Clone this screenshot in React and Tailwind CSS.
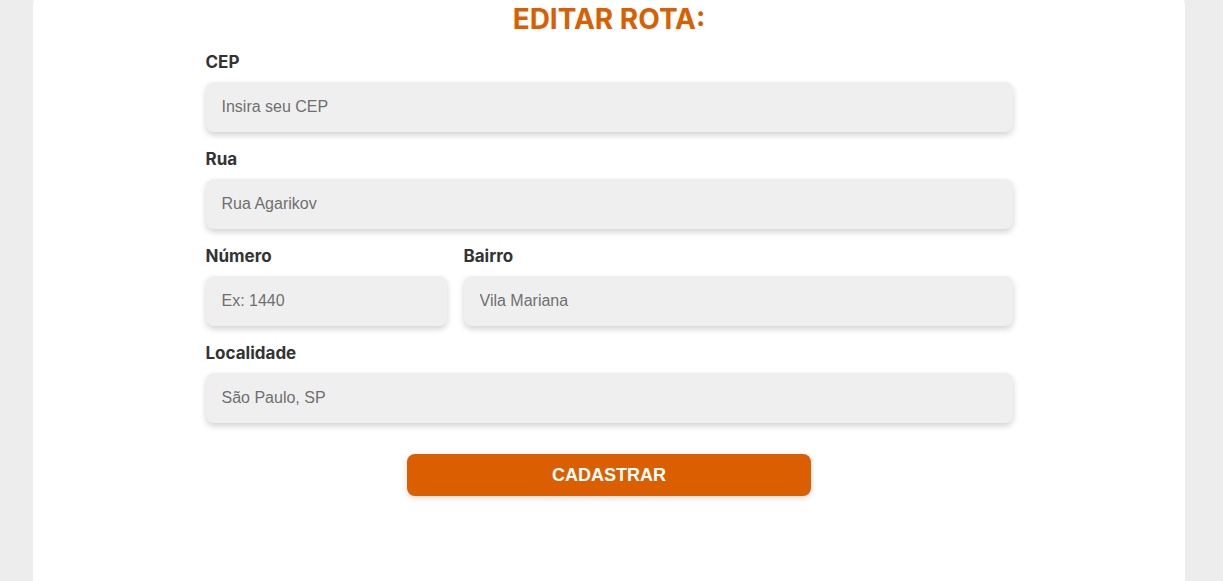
import React from "react";

const LABEL = "block text-[17px] font-bold text-[#333333] font-['Inter','Liberation_Sans',sans-serif] leading-[24px] mb-[8px]";
const INPUT =
  "w-full h-[50px] rounded-[8px] bg-[#efefef] px-[16px] text-[16px] text-[#333] placeholder:text-[#6f6f6f] font-['Liberation_Sans',Arial,sans-serif] shadow-[0_3px_6px_rgba(0,0,0,0.18)] outline-none border-0";

function Field({ label, placeholder, className = "" }) {
  return (
    <div className={className}>
      <label className={LABEL}>{label}</label>
      <input className={INPUT} placeholder={placeholder} />
    </div>
  );
}

export default function App() {
  return (
    <div className="h-[581px] overflow-hidden bg-[#ededed] pl-[33px]">
      <div className="-mt-[10px] h-[640px] w-[1152px] rounded-[16px] bg-white pt-[12px]">
        <h1 className="text-center text-[28px] font-bold leading-[34px] text-[#d95f00] font-['Inter','Liberation_Sans',sans-serif]">
          EDITAR ROTA:
        </h1>
        <form className="mx-auto mt-[14px] w-[807px] flex flex-col gap-[15px]">
          <Field label="CEP" placeholder="Insira seu CEP" />
          <Field label="Rua" placeholder="Rua Agarikov" />
          <div className="flex gap-[17px]">
            <Field label="Número" placeholder="Ex: 1440" className="w-[241px]" />
            <Field label="Bairro" placeholder="Vila Mariana" className="flex-1" />
          </div>
          <Field label="Localidade" placeholder="São Paulo, SP" />
          <div className="flex justify-center mt-[16px]">
            <button
              type="button"
              className="w-[404px] h-[42px] rounded-[8px] bg-[#db5f00] text-white text-[18px] font-bold font-['Liberation_Sans',Arial,sans-serif] shadow-[0_2px_6px_rgba(0,0,0,0.15)]"
            >
              CADASTRAR
            </button>
          </div>
        </form>
      </div>
    </div>
  );
}
